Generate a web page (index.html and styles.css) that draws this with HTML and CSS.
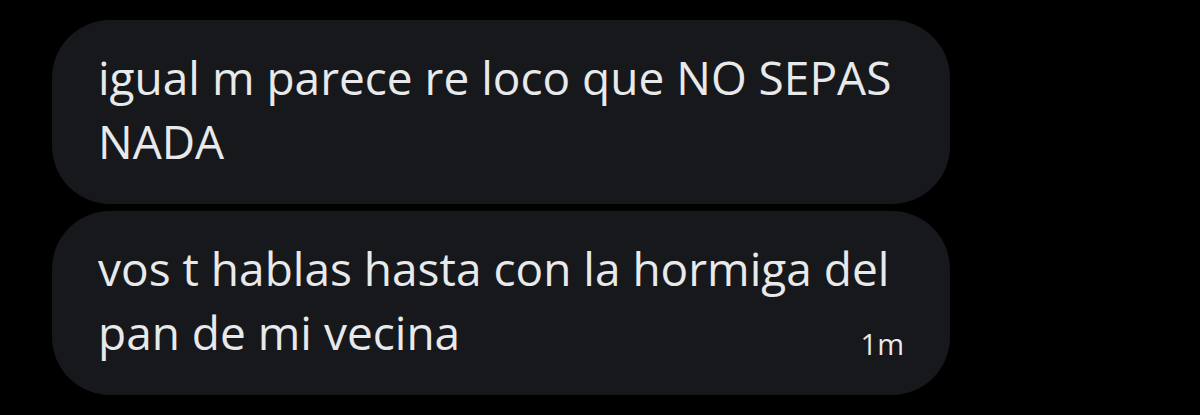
FILE: index.html
```html
<!DOCTYPE html>
<html lang="es">
<head>
    <meta charset="UTF-8">
    <meta name="viewport" content="width=device-width, initial-scale=1.0">
    <title>Mensajes</title>
    <link rel="stylesheet" href="styles.css">
</head>
<body>

<div class="thread">
    <div class="bubble">
        <p class="text">igual m parece re loco que NO SEPAS NADA</p>
    </div>
    <div class="bubble">
        <p class="text">vos t hablas hasta con la hormiga del pan de mi vecina<span class="time">1m</span></p>
    </div>
</div>

</body>
</html>
```

FILE: styles.css
```css
body {
    margin: 0;
    background-color: #000;
    font-family: "Open Sans", "Liberation Sans", Arial, sans-serif;
    color: #e7e9ea;
}
.thread {
    display: flex;
    flex-direction: column;
    gap: 7px;
    width: 898px;
    padding: 20px 0 0 52px;
}
.bubble {
    display: flow-root;
    background-color: #17181b;
    border-radius: 58px;
    padding: 25px 46px 31px;
}
.text {
    margin: 0;
    font-size: 46px;
    line-height: 64px;
}
.time {
    float: right;
    margin-top: 29px;
    font-size: 29px;
    line-height: 29px;
}
```
